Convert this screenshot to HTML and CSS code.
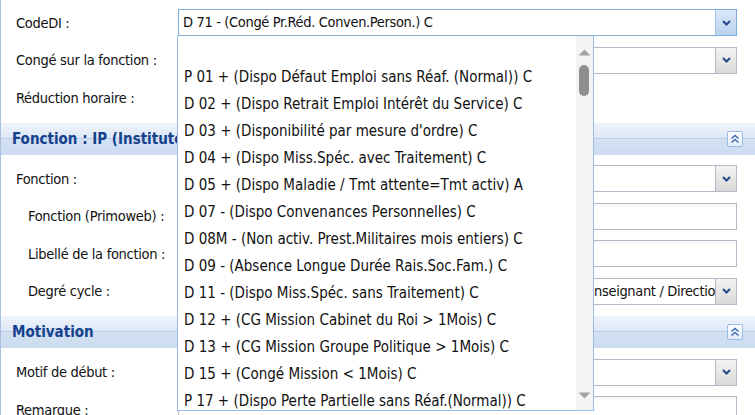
FILE: index.html
```html
<!DOCTYPE html>
<html lang="fr">
<head>
<meta charset="utf-8">
<title>Formulaire</title>
<link rel="stylesheet" href="styles.css">
</head>
<body>
<div class="panel">
  <div class="form">
    <div class="row">
      <span class="lbl">CodeDI :</span>
      <div class="combo focused">
        <span class="val">D 71 - (Congé Pr.Réd. Conven.Person.) C</span>
        <span class="trig"><svg width="9" height="6" viewBox="0 0 9 6"><path d="M1 1 L4.5 4.5 L8 1" stroke="#24498a" stroke-width="2" fill="none"/></svg></span>
      </div>
    </div>
    <div class="row">
      <span class="lbl">Congé sur la fonction :</span>
      <div class="combo">
        <span class="val"></span>
        <span class="trig"><svg width="9" height="6" viewBox="0 0 9 6"><path d="M1 1 L4.5 4.5 L8 1" stroke="#24498a" stroke-width="2" fill="none"/></svg></span>
      </div>
    </div>
    <div class="row">
      <span class="lbl">Réduction horaire :</span>
    </div>

    <div class="hdr">
      <span class="hdr-title">Fonction : IP (Instituteur primaire)</span>
      <span class="tool"><svg width="10" height="10" viewBox="0 0 10 10"><path d="M1.5 4.5 L5 1.5 L8.5 4.5 M1.5 8.5 L5 5.5 L8.5 8.5" stroke="#3f6db5" stroke-width="1.6" fill="none"/></svg></span>
    </div>

    <div class="row">
      <span class="lbl">Fonction :</span>
      <div class="combo">
        <span class="val"></span>
        <span class="trig"><svg width="9" height="6" viewBox="0 0 9 6"><path d="M1 1 L4.5 4.5 L8 1" stroke="#24498a" stroke-width="2" fill="none"/></svg></span>
      </div>
    </div>
    <div class="row sub">
      <span class="lbl">Fonction (Primoweb) :</span>
      <div class="text"></div>
    </div>
    <div class="row sub">
      <span class="lbl">Libellé de la fonction :</span>
      <div class="text"></div>
    </div>
    <div class="row sub">
      <span class="lbl">Degré cycle :</span>
      <div class="combo">
        <span class="val end"><span class="val-in">Enseignant / Direction</span></span>
        <span class="trig"><svg width="9" height="6" viewBox="0 0 9 6"><path d="M1 1 L4.5 4.5 L8 1" stroke="#24498a" stroke-width="2" fill="none"/></svg></span>
      </div>
    </div>

    <div class="hdr">
      <span class="hdr-title">Motivation</span>
      <span class="tool"><svg width="10" height="10" viewBox="0 0 10 10"><path d="M1.5 4.5 L5 1.5 L8.5 4.5 M1.5 8.5 L5 5.5 L8.5 8.5" stroke="#3f6db5" stroke-width="1.6" fill="none"/></svg></span>
    </div>

    <div class="row">
      <span class="lbl">Motif de début :</span>
      <div class="combo">
        <span class="val"></span>
        <span class="trig"><svg width="9" height="6" viewBox="0 0 9 6"><path d="M1 1 L4.5 4.5 L8 1" stroke="#24498a" stroke-width="2" fill="none"/></svg></span>
      </div>
    </div>
    <div class="row">
      <span class="lbl">Remarque :</span>
      <div class="text tall"></div>
    </div>
  </div>

  <div class="dropdown">
    <ul class="list">
      <li>&nbsp;</li>
      <li>P 01 + (Dispo Défaut Emploi sans Réaf. (Normal)) C</li>
      <li>D 02 + (Dispo Retrait Emploi Intérêt du Service) C</li>
      <li>D 03 + (Disponibilité par mesure d'ordre) C</li>
      <li>D 04 + (Dispo Miss.Spéc. avec Traitement) C</li>
      <li>D 05 + (Dispo Maladie / Tmt attente=Tmt activ) A</li>
      <li>D 07 - (Dispo Convenances Personnelles) C</li>
      <li>D 08M - (Non activ. Prest.Militaires mois entiers) C</li>
      <li>D 09 - (Absence Longue Durée Rais.Soc.Fam.) C</li>
      <li>D 11 - (Dispo Miss.Spéc. sans Traitement) C</li>
      <li>D 12 + (CG Mission Cabinet du Roi &gt; 1Mois) C</li>
      <li>D 13 + (CG Mission Groupe Politique &gt; 1Mois) C</li>
      <li>D 15 + (Congé Mission &lt; 1Mois) C</li>
      <li>P 17 + (Dispo Perte Partielle sans Réaf.(Normal)) C</li>
    </ul>
    <div class="sb">
      <svg class="sb-up" width="13" height="7" viewBox="0 0 13 7"><path d="M0.5 6.5 L6.5 0.5 L12.5 6.5 Z" fill="#a3a3a3"/></svg>
      <div class="sb-thumb"></div>
      <svg class="sb-down" width="13" height="7" viewBox="0 0 13 7"><path d="M0.5 0.5 L6.5 6.5 L12.5 0.5 Z" fill="#a3a3a3"/></svg>
    </div>
  </div>
</div>
</body>
</html>
```

FILE: styles.css
```css
html, body {
  margin: 0;
  padding: 0;
  background: #ffffff;
}
body {
  width: 755px;
  height: 415px;
  overflow: hidden;
  font-family: "DejaVu Sans Condensed", "Liberation Sans", sans-serif;
  font-size: 15px;
  color: #111;
}
.panel {
  position: relative;
  height: 415px;
  border-left: 1px solid #a9c0de;
  box-sizing: border-box;
}
.form {
  padding-top: 3.75px;
}
.row {
  display: flex;
  align-items: center;
  height: 37.5px;
  padding-left: 15px;
}
.row .lbl {
  width: 162px;
  flex: none;
  white-space: nowrap;
  font-size: 14.5px;
  letter-spacing: -0.3px;
}
.row.sub {
  padding-left: 27px;
}
.row.sub .lbl {
  width: 150px;
}
.combo, .text {
  flex: none;
  width: 559px;
  height: 27px;
  box-sizing: border-box;
  border: 1px solid #b5b8c8;
  background: #fff;
  display: flex;
  align-items: stretch;
}
.text {
  background: linear-gradient(#f4f4f4 0, #ffffff 4px);
}
.text.tall {
  height: 40px;
  align-self: flex-start;
  margin-top: 5.25px;
}
.combo .val {
  flex: 1;
  overflow: hidden;
  white-space: nowrap;
  padding-left: 4px;
  line-height: 25px;
  font-size: 14.5px;
  letter-spacing: -0.35px;
}
.combo .val.end {
  display: flex;
  justify-content: flex-end;
}
.combo .val-in {
  flex: none;
  margin-right: -8px;
}
.combo .trig {
  flex: none;
  width: 20px;
  border-left: 1px solid #b5b8c8;
  background: linear-gradient(#f3f3f3, #d9d9d9);
  display: flex;
  align-items: center;
  justify-content: center;
  position: relative;
}
.combo .trig svg {
  margin-left: 1px;
}
.combo.focused {
  border-color: #7eadd9;
}
.combo.focused .trig {
  border-left-color: #9fc2e6;
  background: linear-gradient(#dbe8f7, #b9d2ef);
}
.hdr {
  height: 32px;
  margin: 6.5px 0 5px;
  display: flex;
  align-items: center;
  justify-content: space-between;
  padding: 0 12px 0 11px;
  background: linear-gradient(#eff4fb 0, #dde8f6 15px, #b8cde9 15px, #b8cde9 16px, #d4e1f3 16px, #cbdbf0 32px);
}
.hdr-title {
  font-weight: bold;
  color: #15428b;
  white-space: nowrap;
}
.tool {
  width: 14px;
  height: 14px;
  border: 1px solid #99bbe8;
  border-radius: 2px;
  background: linear-gradient(#ffffff, #e4ecf8);
  display: flex;
  align-items: center;
  justify-content: center;
}
.dropdown {
  position: absolute;
  left: 176px;
  top: 36px;
  width: 417px;
  height: 375px;
  box-sizing: border-box;
  border: 1px solid #99bbe8;
  border-top: none;
  background: #fff;
  overflow: hidden;
}
.list {
  list-style: none;
  margin: 0;
  padding: 1px 0 0 0;
}
.list li {
  height: 27px;
  line-height: 27px;
  padding-left: 6px;
  white-space: nowrap;
  color: #111;
}
.sb {
  position: absolute;
  top: 0;
  right: 0;
  bottom: 0;
  width: 17px;
  background: #f4f4f4;
}
.sb-up {
  position: absolute;
  left: 2px;
  top: 13px;
}
.sb-thumb {
  position: absolute;
  left: 3px;
  top: 29px;
  width: 10px;
  height: 31px;
  border-radius: 5px;
  background: #8f8f8f;
}
.sb-down {
  position: absolute;
  left: 2px;
  top: 356px;
}
```
